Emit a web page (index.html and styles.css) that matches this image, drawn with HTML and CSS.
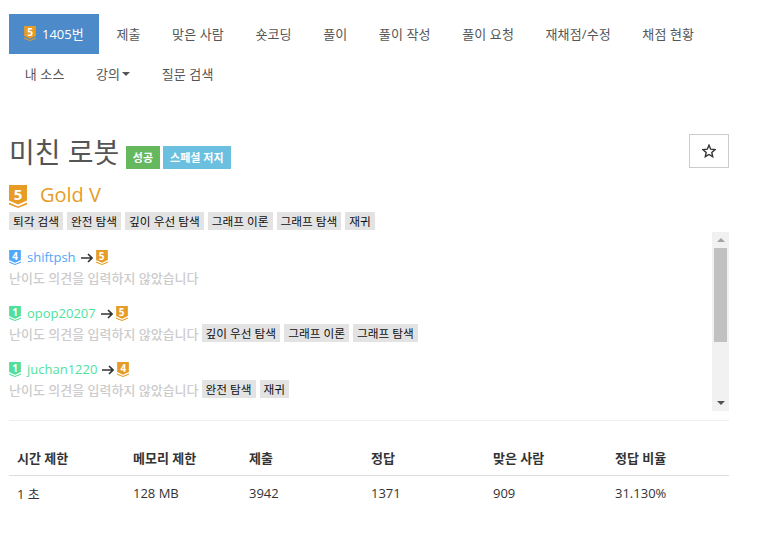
FILE: index.html
```html
<!DOCTYPE html>
<html lang="ko">
<head>
  <meta charset="UTF-8">
  <title>미친 로봇</title>
  <link rel="stylesheet" href="styles.css">
</head>
<body>

<svg class="defs" width="0" height="0">
  <symbol id="badge" viewBox="0 0 18 23">
    <path fill="currentColor" d="M0 0H18V15.5L9 19.5L0 15.5Z"/>
    <path fill="currentColor" d="M0 17.5L9 21.5L18 17.5V19.5L9 23L0 19.5Z"/>
  </symbol>
  <symbol id="arrow" viewBox="0 0 12 10">
    <path fill="none" stroke="currentColor" stroke-width="1.6" d="M0 5H11M7 1L11 5L7 9"/>
  </symbol>
</svg>

<ul class="nav">
  <li class="active"><a><span class="tier tier-gold"><svg><use href="#badge"/></svg><b>5</b></span>1405번</a></li>
  <li><a>제출</a></li>
  <li><a>맞은 사람</a></li>
  <li><a>숏코딩</a></li>
  <li><a>풀이</a></li>
  <li><a>풀이 작성</a></li>
  <li><a>풀이 요청</a></li>
  <li><a>재채점/수정</a></li>
  <li><a>채점 현황</a></li>
  <li><a>내 소스</a></li>
  <li><a>강의<i class="caret"></i></a></li>
  <li><a>질문 검색</a></li>
</ul>

<div class="page">
  <div class="title-row">
    <h1>미친 로봇</h1>
    <span class="label label-success">성공</span>
    <span class="label label-info">스페셜 저지</span>
    <button class="star"><svg viewBox="0 0 14 14" width="14" height="14"><path d="M7 1.2L8.7 5.2L13 5.6L9.8 8.4L10.7 12.7L7 10.5L3.3 12.7L4.2 8.4L1 5.6L5.3 5.2Z"/></svg></button>
  </div>

  <div class="level">
    <span class="tier tier-big tier-gold"><svg><use href="#badge"/></svg><b>5</b></span>
    <span class="level-name">Gold V</span>
  </div>
  <div class="tags">
    <span class="tag">퇴각 검색</span>
    <span class="tag">완전 탐색</span>
    <span class="tag">깊이 우선 탐색</span>
    <span class="tag">그래프 이론</span>
    <span class="tag">그래프 탐색</span>
    <span class="tag">재귀</span>
  </div>

  <div class="opinions">
    <div class="opinion-list">
      <div class="opinion">
        <div class="who">
          <span class="tier tier-blue"><svg><use href="#badge"/></svg><b>4</b></span>
          <span class="user user-blue">shiftpsh</span>
          <svg class="arrow"><use href="#arrow"/></svg>
          <span class="tier tier-gold"><svg><use href="#badge"/></svg><b>5</b></span>
        </div>
        <div class="note"><span class="empty">난이도 의견을 입력하지 않았습니다</span></div>
      </div>
      <div class="opinion">
        <div class="who">
          <span class="tier tier-green"><svg><use href="#badge"/></svg><b>1</b></span>
          <span class="user user-green">opop20207</span>
          <svg class="arrow"><use href="#arrow"/></svg>
          <span class="tier tier-gold"><svg><use href="#badge"/></svg><b>5</b></span>
        </div>
        <div class="note">
          <span class="empty">난이도 의견을 입력하지 않았습니다</span>
          <span class="tag">깊이 우선 탐색</span>
          <span class="tag">그래프 이론</span>
          <span class="tag">그래프 탐색</span>
        </div>
      </div>
      <div class="opinion">
        <div class="who">
          <span class="tier tier-green"><svg><use href="#badge"/></svg><b>1</b></span>
          <span class="user user-green">juchan1220</span>
          <svg class="arrow"><use href="#arrow"/></svg>
          <span class="tier tier-gold"><svg><use href="#badge"/></svg><b>4</b></span>
        </div>
        <div class="note">
          <span class="empty">난이도 의견을 입력하지 않았습니다</span>
          <span class="tag">완전 탐색</span>
          <span class="tag">재귀</span>
        </div>
      </div>
    </div>
    <div class="scrollbar">
      <i class="sb-up"></i>
      <div class="sb-track"><div class="sb-thumb"></div></div>
      <i class="sb-down"></i>
    </div>
  </div>

  <hr>

  <table>
    <thead>
      <tr><th>시간 제한</th><th>메모리 제한</th><th>제출</th><th>정답</th><th>맞은 사람</th><th>정답 비율</th></tr>
    </thead>
    <tbody>
      <tr><td>1 초</td><td>128 MB</td><td>3942</td><td>1371</td><td>909</td><td>31.130%</td></tr>
    </tbody>
  </table>

  <h2>문제</h2>
</div>

</body>
</html>
```

FILE: styles.css
```css
* { box-sizing: border-box; }
body { margin: 0; font-family: "Open Sans", "Noto Sans CJK KR", sans-serif; font-size: 13px; color: #333; background: #fff; }
.defs { position: absolute; }

.nav { display: flex; flex-wrap: wrap; list-style: none; margin: 0; padding: 14px 0 0 9px; width: 729px; }
.nav a { display: flex; align-items: center; height: 40px; padding: 0 15.75px 2px; color: #555; letter-spacing: 0.12px; }
.nav .active { margin-right: 1.7px; }
.nav .active a { background: #4d8ac9; color: #fff; padding: 0 15px 2px; width: 90px; letter-spacing: 0; }
.nav .active .tier { margin-right: 6px; }
.caret { display: inline-block; margin-left: 2px; margin-top: 2px; border-top: 4px solid #555; border-left: 4px solid transparent; border-right: 4px solid transparent; }

.page { padding: 0 32px 0 9px; }

.title-row { display: flex; align-items: flex-end; margin-top: 40px; height: 35px; position: relative; }
h1 { font-size: 28px; font-weight: 400; line-height: 34px; margin: 0 7px 0 0; color: #555; }
.label { height: 23px; line-height: 23px; margin-right: 3px; color: #fff; font-size: 11px; font-weight: 700; white-space: nowrap; }
.label-success { background: #66b85e; padding: 0 6.5px; }
.label-info { background: #6cc0df; padding: 0 7.5px; }
.star { position: absolute; right: 0; top: 0; display: flex; align-items: center; justify-content: center; width: 40px; height: 34px; padding: 0; background: #fff; border: 1px solid #ccc; }
.star path { fill: none; stroke: #333; stroke-width: 1.4; }

.tier { position: relative; display: inline-block; width: 12px; height: 15px; vertical-align: -3px; }
.tier svg { display: block; width: 100%; height: 100%; }
.tier b { position: absolute; left: 0; right: 0; top: 0; text-align: center; font-size: 10px; line-height: 12px; color: #fff; }
.tier-big { width: 18px; height: 23px; }
.tier-big b { font-size: 15px; line-height: 19px; }
.tier-gold { color: #e79c25; }
.tier-blue { color: #51a7f9; }
.tier-green { color: #51df9c; }

.level { display: flex; align-items: center; margin-top: 16px; height: 23px; }
.level-name { margin-left: 13px; padding-bottom: 5px; font-size: 20px; line-height: 21px; color: #e79c25; }

.tags { display: flex; gap: 4px; margin-top: 4px; height: 18px; }
.tag { display: inline-block; height: 18px; line-height: 18px; padding: 0 4px; background: #e3e3e3; color: #111; font-size: 11.7px; white-space: nowrap; }

.opinions { display: flex; justify-content: space-between; height: 179px; margin-top: 2px; }
.opinion-list { padding-top: 17px; }
.opinion { height: 56px; }
.who { display: flex; align-items: center; height: 17px; }
.user { margin: 0 5px 2px 6px; }
.user-blue { color: #51a7f9; }
.user-green { color: #51df9c; }
.arrow { width: 12px; height: 10px; margin-right: 3px; color: #333; }
.note { display: flex; align-items: center; gap: 4px; height: 18px; margin-top: 2px; }
.empty { color: #ccc; font-weight: 500; font-size: 13px; margin-right: -1px; }

.scrollbar { display: flex; flex-direction: column; width: 17px; background: #f1f1f1; }
.sb-up, .sb-down { display: block; width: 0; margin: 6px auto; height: 4px; border-left: 4px solid transparent; border-right: 4px solid transparent; }
.sb-up { border-bottom: 4px solid #a3a3a3; }
.sb-down { border-top: 4px solid #505050; }
.sb-track { flex: 1; padding: 0 2px; }
.sb-thumb { height: 94px; background: #c1c1c1; }

hr { border: 0; border-top: 1px solid #eee; margin: 9px 0 0; }

table { width: 100%; border-collapse: collapse; table-layout: fixed; margin-top: 19px; }
th, td { padding: 0 8px; text-align: left; font-size: 13px; }
th:nth-child(1), th:nth-child(2) { width: 116px; }
th { height: 35px; font-weight: 700; border-bottom: 1px solid #ddd; color: #333; }
td { height: 36px; }

h2 { font-size: 24px; line-height: 34px; font-weight: 400; margin: 37px 0 0; color: #555; }
```
